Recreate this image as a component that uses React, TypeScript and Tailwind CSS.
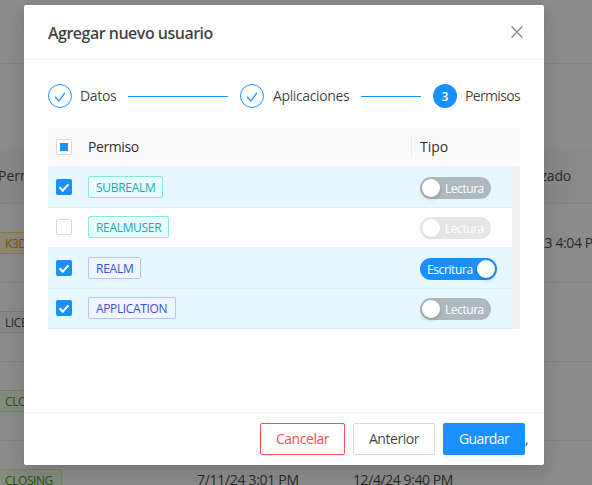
import React from "react";

type Tone = "cyan" | "geekblue";

const tones: Record<Tone, string> = {
  cyan: "bg-[#e6fffb] border-[#87e8de] text-[#2aa5a7]",
  geekblue: "bg-[#f0f5ff] border-[#adc6ff] text-[#3a53cc]",
};

const permisos = [
  { name: "SUBREALM", tone: "cyan" as Tone, row: "h-[41px] pt-[9px]", width: "w-[75px]", tracking: "tracking-[-0.3px]", checked: true, write: false },
  { name: "REALMUSER", tone: "cyan" as Tone, row: "h-10 pt-2", width: "w-[81px]", tracking: "tracking-[-0.32px]", checked: false, write: false },
  { name: "REALM", tone: "geekblue" as Tone, row: "h-[41px] pt-[9px]", width: "w-[53px]", tracking: "tracking-[-0.25px]", checked: true, write: true },
  { name: "APPLICATION", tone: "geekblue" as Tone, row: "h-10 pt-2", width: "w-[88px]", tracking: "tracking-[-0.36px]", checked: true, write: false },
];

function Checkbox({ checked }: { checked: boolean }) {
  if (!checked) return <span className="mt-[3px] block size-4 rounded-[2px] border border-[#d9d9d9] bg-white" />;
  return (
    <span className="mt-[3px] block size-4 rounded-[2px] bg-[#1890ff]">
      <svg viewBox="0 0 16 16" className="size-4" fill="none" stroke="white" strokeWidth="2.1">
        <path d="M3.5 8.2 L6.8 11.6 L12.4 5.4" />
      </svg>
    </span>
  );
}

function Toggle({ on, disabled }: { on: boolean; disabled: boolean }) {
  const knob = <span className="size-[18px] shrink-0 rounded-full bg-white shadow-[0_2px_4px_rgba(0,35,11,0.2)]" />;
  if (on)
    return (
      <span className="mt-px flex h-[22px] w-[77px] items-center justify-between rounded-full bg-[#1890ff] pr-0.5 pl-[7px] text-xs text-white">
        <span className="pt-0.5 tracking-[-0.4px]">Escritura</span>
        {knob}
      </span>
    );
  return (
    <span className={`mt-px flex h-[22px] w-[71px] items-center gap-[5px] rounded-full bg-black/25 pl-0.5 text-xs text-white ${disabled ? "opacity-40" : ""}`}>
      {knob}
      <span className="pt-0.5 tracking-[-0.45px]">Lectura</span>
    </span>
  );
}

function StepDone() {
  return (
    <span className="flex size-6 shrink-0 items-center justify-center rounded-full border border-[#1890ff]">
      <svg viewBox="0 0 24 24" className="size-6 shrink-0" fill="none" stroke="#1890ff" strokeWidth="1.2">
        <path d="M7 12.6 L10.8 17 L16.8 8.8" />
      </svg>
    </span>
  );
}

function Backdrop() {
  const cell = "flex h-[79px] items-center border-b border-[#838383]";
  const tag = "flex h-[22px] items-center rounded-[2px] border px-[7px] pt-px text-xs tracking-[-0.42px]";
  return (
    <div className="h-[485px] w-[592px] overflow-hidden bg-[#8c8c8c] text-sm text-[#2b2b2b]">
      <div className="h-16 border-b border-[#838383]" />
      <div className="h-[85px]" />
      <div className="flex h-[55px] items-center justify-between border-b border-[#838383] bg-[#898989] pr-[21px] font-medium">
        <span className="-ml-0.5">Permiso</span>
        <span className="tracking-[-0.2px]">Actualizado</span>
      </div>
      <div className={`${cell} justify-between`}>
        <span className={`${tag} -ml-[3px] border-[#8f7839] bg-[#8c8978] text-[#7d520d]`}>K3D</span>
        <span className="-mr-[13px] tracking-[-0.4px]">10/3/23 4:04 PM</span>
      </div>
      <div className={cell}>
        <span className={`${tag} -ml-[3px] border-[#777] bg-[#898989]`}>LICENSE</span>
      </div>
      <div className={cell}>
        <span className={`${tag} -ml-[3px] border-[#649149] bg-[#868c82] text-[#1f570b]`}>CLOSING</span>
      </div>
      <div className={cell}>
        <span className={`${tag} -ml-[3px] w-[65px] border-[#649149] bg-[#868c82] text-[#1f570b]`}>CLOSING</span>
        <span className="ml-[135px] w-[156px] tracking-[-0.3px]">7/11/24 3:01 PM</span>
        <span className="tracking-[-0.42px]">12/4/24 9:40 PM</span>
      </div>
    </div>
  );
}

export default function App() {
  return (
    <div className="relative h-[485px] w-[592px] overflow-hidden font-['Open_Sans','Noto_Sans',sans-serif]">
      <Backdrop />
      <section className="absolute top-[5px] left-6 flex h-[460px] w-[520px] flex-col rounded-[2px] bg-white text-sm text-black/75 shadow-[0_3px_6px_-4px_rgba(0,0,0,0.12),0_6px_16px_0_rgba(0,0,0,0.08),0_9px_28px_8px_rgba(0,0,0,0.05)]">
        <header className="flex h-[55px] shrink-0 items-center justify-between border-b border-[#f0f0f0] pr-[21px] pl-6">
          <h1 className="pt-px text-base font-semibold tracking-[-0.5px] text-black/75">Agregar nuevo usuario</h1>
          <svg viewBox="0 0 12 12" className="size-3" fill="none" stroke="#808080" strokeWidth="1.3">
            <path d="M.6 .4 L11.4 11.6 M11.4 .4 L.6 11.6" />
          </svg>
        </header>
        <main className="flex-1 px-6 pt-6">
          <div className="flex h-6 items-center">
            <StepDone />
            <span className="ml-2 w-9 shrink-0 tracking-[-0.35px]">Datos</span>
            <span className="ml-3 h-px w-[100px] shrink-0 bg-[#1890ff]" />
            <span className="ml-3"><StepDone /></span>
            <span className="ml-2 w-[77px] shrink-0 pl-px tracking-[-0.38px]">Aplicaciones</span>
            <span className="ml-3 h-px w-[60px] shrink-0 bg-[#1890ff]" />
            <span className="ml-3 flex size-6 shrink-0 items-center justify-center rounded-full bg-[#1890ff] pt-px text-xs font-semibold text-white">3</span>
            <span className="ml-2 tracking-[-0.65px]">Permisos</span>
          </div>
          <div className="mt-5 flex h-[39px] items-center border-b border-[#f0f0f0] bg-[#fafafa] pl-2 font-medium text-black/85">
            <span className="flex size-4 items-center justify-center rounded-[2px] border border-[#d9d9d9] bg-white">
              <span className="size-2 bg-[#1890ff]" />
            </span>
            <span className="ml-4 w-[323px] tracking-[-0.4px]">Permiso</span>
            <span className="h-[22px] w-px bg-[#ececec]" />
            <span className="ml-2">Tipo</span>
          </div>
          <div className="flex">
            <div className="w-[464px]">
              {permisos.map((p) => (
                <div key={p.name} className={`flex items-start border-b pl-2 ${p.row} ${p.checked ? "border-[#daeef8] bg-[#e6f7ff]" : "border-[#f0f0f0]"}`}>
                  <Checkbox checked={p.checked} />
                  <span className="ml-4 w-[332px]">
                    <span className={`flex h-[22px] items-center rounded-[2px] border px-[7px] pt-0.5 text-xs ${p.width} ${p.tracking} ${tones[p.tone]}`}>{p.name}</span>
                  </span>
                  <Toggle on={p.write} disabled={!p.checked} />
                </div>
              ))}
            </div>
            <div className="w-2 bg-[#f0f0f0]" />
          </div>
        </main>
        <footer className="flex h-[53px] shrink-0 items-center justify-end gap-2 border-t border-[#f0f0f0] pr-4">
          <button className="h-8 w-[85px] rounded-[2px] border border-[#ff4d4f] tracking-[-0.45px] text-[#ff4d4f]">Cancelar</button>
          <button className="h-8 w-[82px] rounded-[2px] border border-[#d9d9d9] tracking-[-0.45px] shadow-[0_2px_0_rgba(0,0,0,0.016)]">Anterior</button>
          <div className="flex items-center">
            <button className="h-8 w-[82px] rounded-[2px] bg-[#1890ff] tracking-[-0.6px] text-white shadow-[0_2px_0_rgba(0,0,0,0.045)]">Guardar</button>
            <span className="w-[3px]">,</span>
          </div>
        </footer>
      </section>
    </div>
  );
}
